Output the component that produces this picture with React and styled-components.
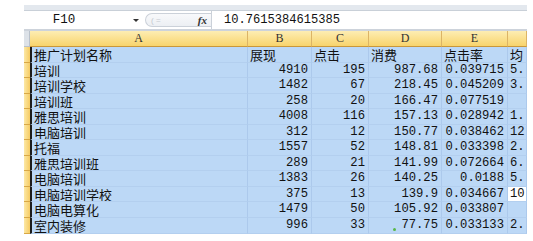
import React from 'react';
import styled, { createGlobalStyle } from 'styled-components';

const GlobalStyle = createGlobalStyle`
  html, body {
    margin: 0;
    padding: 0;
    background: #fff;
  }
`;

const COLS = '6px 218px 64px 57px 73px 66px 19px';

const rows = [
  ['推广计划名称', '展现', '点击', '消费', '点击率', '均'],
  ['培训', '4910', '195', '987.68', '0.039715', '5.'],
  ['培训学校', '1482', '67', '218.45', '0.045209', '3.'],
  ['培训班', '258', '20', '166.47', '0.077519', ''],
  ['雅思培训', '4008', '116', '157.13', '0.028942', '1.'],
  ['电脑培训', '312', '12', '150.77', '0.038462', '12'],
  ['托福', '1557', '52', '148.81', '0.033398', '2.'],
  ['雅思培训班', '289', '21', '141.99', '0.072664', '6.'],
  ['电脑培训', '1383', '26', '140.25', '0.0188', '5.'],
  ['电脑培训学校', '375', '13', '139.9', '0.034667', '10'],
  ['电脑电算化', '1479', '50', '105.92', '0.033807', ''],
  ['室内装修', '996', '33', '77.75', '0.033133', '2.'],
];

const Window = styled.div`
  margin-left: 24px;
  width: 503px;
  padding-top: 5px;
  height: 236px;
  overflow: hidden;
`;

const TopBand = styled.div`
  height: 5px;
  background: #e3e8ee;
  border-bottom: 1px solid #c9d0d8;
`;

const FormulaBar = styled.div`
  height: 18px;
  display: flex;
  align-items: center;
  background: #fff;
  border-bottom: 2px solid #cdd3db;
`;

const NameBox = styled.div`
  width: 80px;
  text-align: center;
  font-family: "Liberation Mono", monospace;
  font-size: 12.5px;
  color: #111;
`;

const Arrow = styled.div`
  margin-left: 29px;
  width: 0;
  height: 0;
  border-left: 3px solid transparent;
  border-right: 3px solid transparent;
  border-top: 3px solid #333;
`;

const Pill = styled.div`
  margin-left: 6px;
  height: 14px;
  width: 66px;
  box-sizing: border-box;
  border: 1px solid #cbd1d9;
  border-right: none;
  border-radius: 8px 0 0 8px;
  background: linear-gradient(#f8f9fb, #eceff3);
  display: flex;
  align-items: center;
  justify-content: space-between;
  padding: 0 4px 0 5px;
`;

const Faint = styled.span`
  font-family: "Liberation Sans", sans-serif;
  font-size: 8px;
  color: #c4c9cf;
`;

const Fx = styled.span`
  font-family: "Liberation Serif", serif;
  font-style: italic;
  font-weight: bold;
  font-size: 11px;
  color: #333;
`;

const FormulaText = styled.div`
  flex: 1;
  height: 100%;
  border-left: 1px solid #cbd1d9;
  padding-left: 12px;
  display: flex;
  align-items: center;
  font-family: "Liberation Mono", monospace;
  font-size: 12.1px;
  color: #111;
`;

const Row = styled.div`
  display: grid;
  grid-template-columns: ${COLS};
  height: ${p => (p.$head ? '16px' : '15.55px')};
`;

const Corner = styled.div`
  background: #dde2e8;
  border-right: 1px solid #b9c1cb;
  border-bottom: 1px solid #b9c1cb;
`;

const ColHead = styled.div`
  background: linear-gradient(#fdedb3, #f8d46c);
  border-right: 1px solid #dcb466;
  border-bottom: 1px solid #c9973a;
  text-align: center;
  font-family: "Liberation Serif", serif;
  font-size: 12px;
  line-height: 15px;
  color: #333;
  overflow: hidden;
`;

const RowHead = styled.div`
  background: linear-gradient(90deg, #fce8a6, #f6cb62);
  border-bottom: 1px solid #d9a845;
`;

const Cell = styled.div`
  position: relative;
  box-sizing: border-box;
  background: ${p => (p.$active ? '#fff' : '#bcd8f6')};
  border-right: 1px solid #acc9ec;
  border-bottom: 1px solid #b3cfef;
  border-left: ${p => (p.$first ? '2px solid #1c1c1c' : 'none')};
  padding: ${p => (p.$right ? '0 3px 0 0' : '0 0 0 2px')};
  text-align: ${p => (p.$right ? 'right' : 'left')};
  font-family: ${p =>
    p.$mono ? '"Liberation Mono", monospace' : '"Noto Sans CJK SC", sans-serif'};
  font-size: ${p => (p.$mono ? '12.2px' : '13px')};
  line-height: 15px;
  color: #111;
  white-space: nowrap;
  overflow: hidden;
`;

const Dot = styled.span`
  position: absolute;
  left: 24px;
  bottom: 2px;
  width: 3px;
  height: 3px;
  border-radius: 50%;
  background: #58b848;
`;

export default function App() {
  return (
    <>
      <GlobalStyle />
      <Window>
        <TopBand />
        <FormulaBar>
          <NameBox>F10</NameBox>
          <Arrow />
          <Pill>
            <Faint>( =</Faint>
            <Fx>fx</Fx>
          </Pill>
          <FormulaText>10.7615384615385</FormulaText>
        </FormulaBar>
        <Row $head>
          <Corner />
          {['A', 'B', 'C', 'D', 'E', ''].map((l, i) => (
            <ColHead key={i}>{l}</ColHead>
          ))}
        </Row>
        {rows.map((r, ri) => (
          <Row key={ri}>
            <RowHead />
            {r.map((v, ci) => (
              <Cell
                key={ci}
                $first={ci === 0}
                $mono={ri > 0 && ci > 0}
                $right={ri > 0 && ci > 0 && ci < 5}
                $active={ri === 9 && ci === 5}
              >
                {v}
                {ri === 11 && ci === 3 && <Dot />}
              </Cell>
            ))}
          </Row>
        ))}
      </Window>
    </>
  );
}
